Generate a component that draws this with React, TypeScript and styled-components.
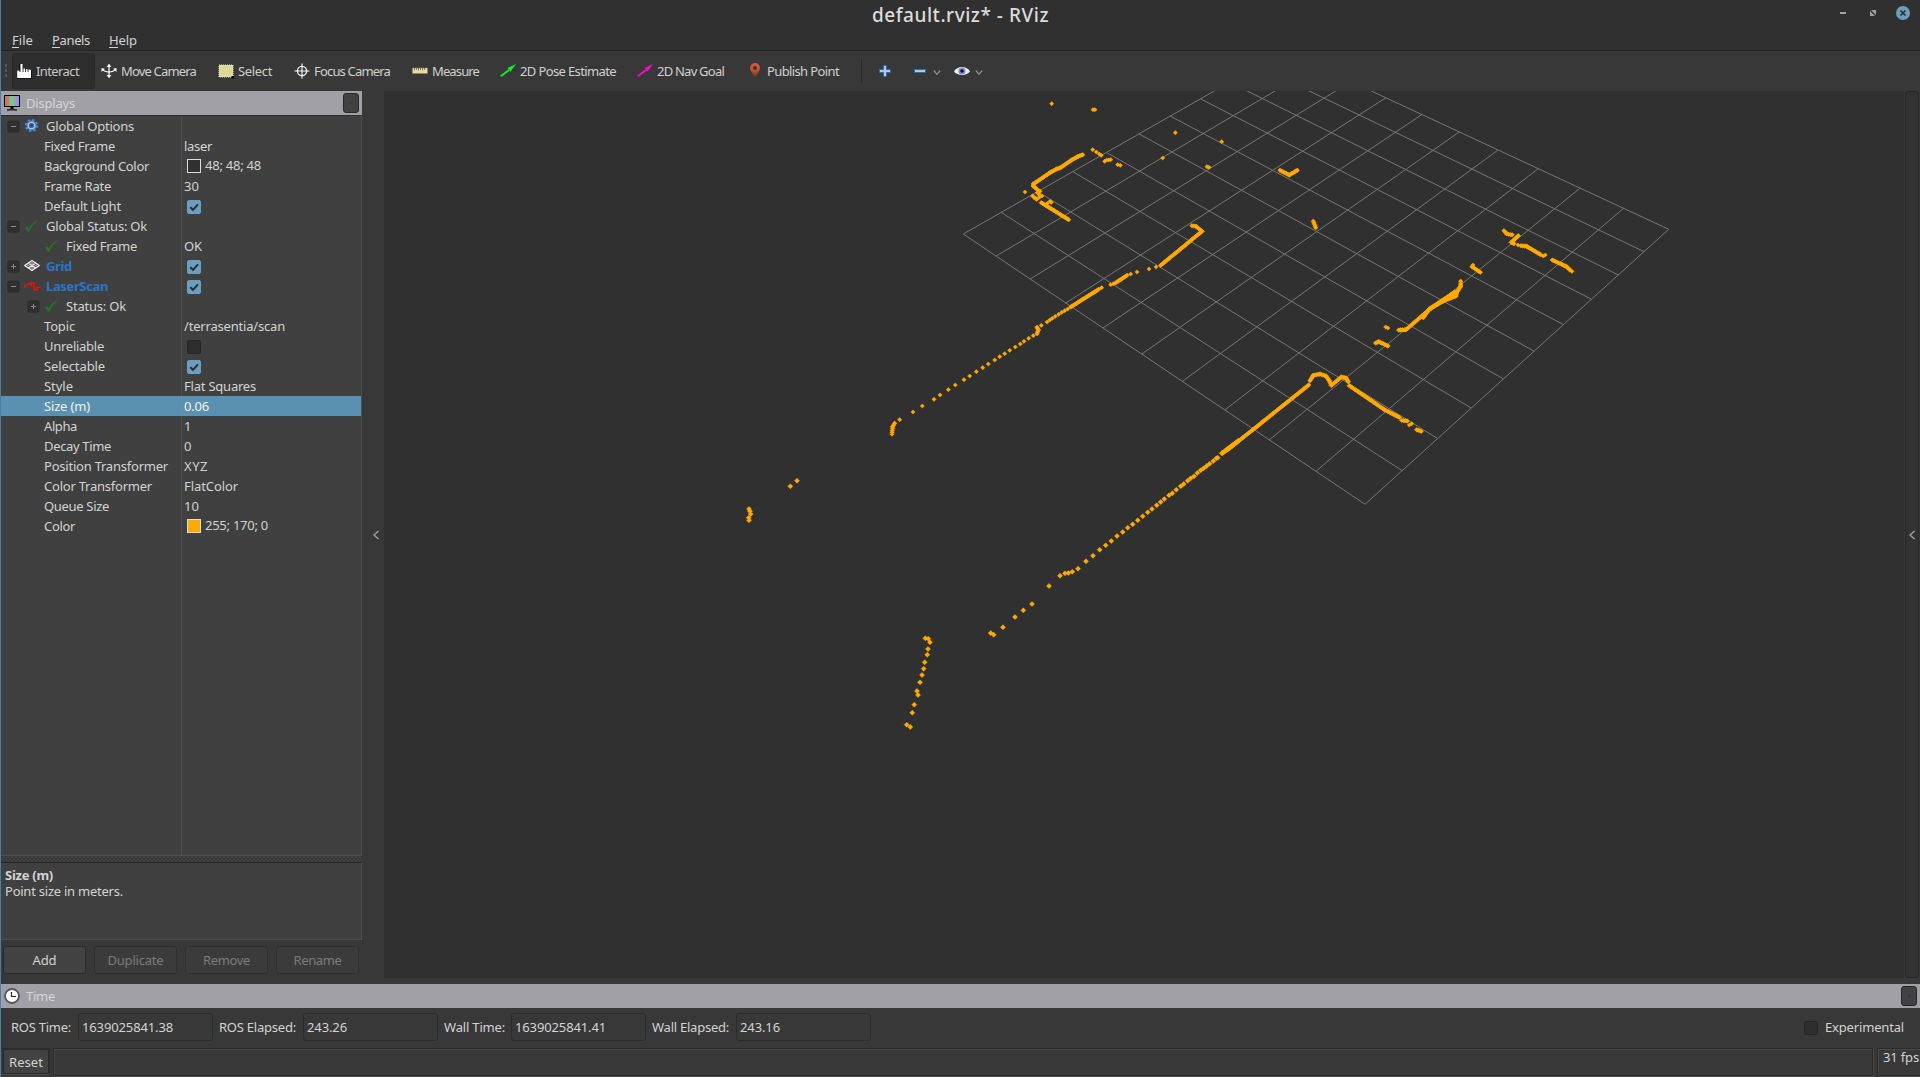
import React, { useLayoutEffect, useRef, useState } from "react";
import styled, { createGlobalStyle } from "styled-components";

const c = {
  window: "#303030",
  panel: "#383838",
  base: "#404040",
  line: "#4d4d4d",
  dark: "#2a2a2a",
  text: "#d3d3d3",
  muted: "#7b7b7b",
  dock: "#a1a0a6",
  accent: "#5b91b0",
  check: "#6a9fc0",
  link: "#2a76c6",
  laser: "#ffaa00",
};

const Global = createGlobalStyle`
  * { box-sizing: border-box; }
  body { margin: 0; background: ${c.window}; overflow: hidden; }
`;

const Window = styled.div`
  width: 1920px;
  height: 1077px;
  display: flex;
  flex-direction: column;
  overflow: hidden;
  background: ${c.panel};
  border-left: 1px solid #4682a8;
  color: ${c.text};
  font: 13px/20px "Noto Sans", "Open Sans", sans-serif;
`;

const Label = styled.span`
  display: inline-block;
  white-space: nowrap;
  flex: none;
`;

/* Text tracked so that it spans a given width. */
function Text({ w, children }: { w?: number; children: string }) {
  const ref = useRef<HTMLSpanElement>(null);
  const [gap, setGap] = useState(0);
  useLayoutEffect(() => {
    if (!w || !ref.current) return;
    setGap((w - ref.current.getBoundingClientRect().width) / children.length);
  }, [w, children]);
  return (
    <Label ref={ref} style={{ letterSpacing: gap }}>
      {children}
    </Label>
  );
}

/* ---------- title bar and menu ---------- */

const TitleBar = styled.header`
  height: 30px;
  flex: none;
  display: grid;
  grid-template-columns: 1fr auto 1fr;
  background: ${c.window};
`;
const Title = styled.div`
  grid-column: 2;
  font-size: 19px;
  line-height: 30px;
  font-weight: 500;
  color: #dcdcdc;
`;
const WindowButtons = styled.div`
  display: flex;
  justify-content: flex-end;
  padding: 6px 10px 0 0;
`;
const MenuBar = styled.nav`
  height: 21px;
  flex: none;
  display: flex;
  gap: 19px;
  padding-left: 11px;
  line-height: 20px;
  background: ${c.window};
  border-bottom: 1px solid #242424;
`;
const Menu = styled.div<{ $key: number }>`
  height: 18px;
  background: linear-gradient(${c.text}, ${c.text}) 0 100% / ${(p) => p.$key}px 1px no-repeat;
`;

/* ---------- toolbar ---------- */

const ToolBar = styled.div`
  height: 39px;
  flex: none;
  display: flex;
  align-items: center;
  padding-left: 4px;
`;
const Grip = styled.div`
  width: 2px;
  height: 13px;
  margin-right: 5px;
  background: repeating-linear-gradient(#565656 0 3px, transparent 3px 5px);
`;
const Tool = styled.div<{ $w: number; $on?: boolean }>`
  width: ${(p) => p.$w}px;
  height: 36px;
  flex: none;
  display: flex;
  align-items: center;
  gap: 4px;
  margin-right: ${(p) => (p.$on ? 2 : 0)}px;
  padding-left: 3px;
  border-radius: 3px;
  color: ${(p) => (p.$on ? "#c8c8c8" : "#d0d0d0")};
  border: 1px solid ${(p) => (p.$on ? "#292929" : "transparent")};
  background: ${(p) => (p.$on ? "#2d2d2d" : "none")};
`;
const ToolRule = styled.div`
  width: 1px;
  height: 24px;
  background: #272727;
`;
const ToolExtras = styled.div`
  display: flex;
  align-items: center;
  padding-left: 17px;
`;
const Gap = styled.div<{ $w: number }>`
  width: ${(p) => p.$w}px;
`;

/* ---------- centre ---------- */

const Body = styled.main`
  height: 894px;
  flex: none;
  display: flex;
`;
const Dock = styled.aside`
  width: 361px;
  flex: none;
  display: flex;
  flex-direction: column;
  padding-top: 1px;
`;
const DockTitle = styled.div<{ $r: number }>`
  height: 24px;
  flex: none;
  display: flex;
  align-items: center;
  gap: 6px;
  padding: 0 ${(p) => p.$r}px 0 3px;
  background: ${c.dock};
  color: #d6d6d8;
`;
const DockClose = styled.div`
  width: 16px;
  height: 20px;
  margin-left: auto;
  border: 1px solid #272727;
  border-radius: 3px;
  background: #424242;
  color: #383838;
  font-size: 9px;
  line-height: 18px;
  text-align: center;
`;
const Tree = styled.div`
  height: 741px;
  flex: none;
  border-top: 1px solid #2c2c2c;
  border-right: 1px solid ${c.line};
  border-bottom: 1px solid ${c.line};
  background: linear-gradient(90deg, transparent 180px, ${c.line} 180px 181px, transparent 181px) ${c.base};
`;
const Row = styled.div<{ $on?: boolean }>`
  height: 20px;
  display: grid;
  grid-template-columns: 183px 1fr;
  grid-template-rows: 20px;
  color: ${(p) => (p.$on ? "#f2f2f2" : c.text)};
  background: ${(p) =>
    p.$on ? `linear-gradient(90deg, transparent 180px, #6692ab 180px 181px, transparent 181px) ${c.accent}` : "none"};
`;
const Name = styled.div<{ $pad: number; $link?: boolean }>`
  display: flex;
  align-items: center;
  padding-left: ${(p) => p.$pad}px;
  font-weight: ${(p) => (p.$link ? 700 : 400)};
  color: ${(p) => (p.$link ? c.link : "inherit")};
`;
const Value = styled.div<{ $up?: boolean }>`
  height: 20px;
  display: flex;
  align-items: center;
  line-height: ${(p) => (p.$up ? 18 : 20)}px;
  padding-bottom: ${(p) => (p.$up ? 2 : 0)}px;
`;
const Expander = styled.div`
  width: 11px;
  height: 11px;
  flex: none;
  display: grid;
  place-items: center;
  margin-top: 1px;
  border-radius: 2px;
  background: #2f2f2f;
  box-shadow: 0 0 0 0.5px #272727;
`;
const IconSlot = styled.div<{ $pad: number }>`
  width: 16px;
  height: 16px;
  margin: 0 6px 1px ${(p) => p.$pad}px;
  flex: none;
`;
const Swatch = styled.div<{ $fill: string }>`
  width: 14px;
  height: 14px;
  margin: 1px 4px 0 3px;
  border: 1px solid #dddddd;
  background: ${(p) => p.$fill};
`;
const Box = styled.div<{ $on?: boolean; $m?: number }>`
  width: 14px;
  height: 14px;
  margin: 1px 0 0 ${(p) => p.$m ?? 3}px;
  border-radius: 2px;
  background: ${(p) => (p.$on ? c.check : "#2d2d2d")};
  border: 1px solid ${(p) => (p.$on ? c.check : "#272727")};
  svg { display: block; }
`;
const Splitter = styled.div`
  height: 6px;
  flex: none;
  background: repeating-conic-gradient(#474747 0 25%, #363636 0 50%) 0 0 / 4px 4px;
  opacity: 0.6;
`;
const Help = styled.div`
  height: 78px;
  flex: none;
  padding: 4px;
  line-height: 16px;
  background: ${c.base};
  border: solid ${c.line};
  border-width: 1px 1px 1px 0;
  border-top-color: #262626;
`;
const HelpTitle = styled.div`
  font-weight: 700;
`;
const Buttons = styled.div`
  display: flex;
  gap: 8px;
  padding: 6px 2px 0;
`;
const Button = styled.div<{ $off?: boolean }>`
  width: 83px;
  height: 28px;
  display: grid;
  place-items: center;
  border: 1px solid ${(p) => (p.$off ? "#303030" : "#2a2a2a")};
  border-radius: 3px;
  background: ${(p) => (p.$off ? "#3b3b3b" : "#424242")};
  color: ${(p) => (p.$off ? c.muted : c.text)};
`;
const Strip = styled.div<{ $w: number }>`
  width: ${(p) => p.$w}px;
  flex: none;
  display: flex;
  align-items: center;
  justify-content: center;
  padding: ${(p) => (p.$w > 20 ? "0 0 5px 6px" : "0")};
`;
const SideHandle = styled.div`
  width: 14px;
  height: 887px;
  margin: 1px 0 6px;
  display: grid;
  place-items: center;
  border: 1px solid #282828;
  border-radius: 3px;
  background: #323232;
`;
const View = styled.div`
  flex: 1;
  height: 888px;
  background: ${c.window};
  svg { display: block; }
`;

/* ---------- time panel and status ---------- */

const TimeRow = styled.div`
  height: 40px;
  flex: none;
  display: flex;
  align-items: center;
  padding: 0 16px 2px 10px;
`;
const Field = styled.div<{ $m: number }>`
  width: 135px;
  height: 28px;
  margin: 0 6px 0 ${(p) => p.$m}px;
  padding-left: 3px;
  line-height: 26px;
  border: 1px solid #2b2b2b;
  border-radius: 3px;
`;
const Experimental = styled.div`
  margin-left: auto;
  display: flex;
  align-items: center;
  gap: 7px;
`;
const Status = styled.footer`
  height: 29px;
  flex: none;
  display: flex;
`;
const ResetFrame = styled.div`
  width: 50px;
  height: 27px;
  border-right: 1px solid #2c2c2c;
  padding-left: 2px;
  border-top: 1px solid #2c2c2c;
  border-bottom: 1px solid #4a4a4a;
`;
const Reset = styled.div`
  width: 46px;
  height: 25px;
  display: grid;
  place-items: center;
  border: 1px solid #2a2a2a;
  border-radius: 2px;
  background: #424242;
`;
const Frame = styled.div<{ $w: number; $m: number }>`
  width: ${(p) => p.$w}px;
  height: 28px;
  flex: none;
  margin-left: ${(p) => p.$m}px;
  padding-left: 5px;
  line-height: 17px;
  border: 1px solid #2b2b2b;
  box-shadow: inset 1px 1px #484848, 1px 1px #484848;
`;

/* ---------- icons ---------- */

const Svg = ({ w = 16, h = 16, children }: { w?: number; h?: number; children: React.ReactNode }) => (
  <svg width={w} height={h} viewBox={`0 0 ${w} ${h}`} fill="none">
    {children}
  </svg>
);

const Hand = () => (
  <Svg>
    <path d="M1.200 15V7.500H3.500V9H4.500V1H6.500V5.500H9V6H11.500V6.500H14V7H15V15Z" fill="#fff" />
    <path d="M7 5V9M9.500 5.500V9M12 6V9M3.500 1V8M1 15.500H15.500V8" stroke="#111" strokeWidth=".8" />
  </Svg>
);
const Move = () => (
  <Svg>
    <path d="M8 1.500V14M1.500 6C4 10 12 10 14.500 6" stroke="#f4f4f4" strokeWidth="1.300" />
    <path d="M5.500 4L8 .8L10.500 4ZM5.500 12L8 15.200L10.500 12ZM.5 9V5L4 5.800ZM15.500 9V5L12 5.800Z" fill="#f4f4f4" />
  </Svg>
);
const SelectIcon = () => (
  <Svg>
    <rect x="1" y="2" width="14" height="12" fill="#dcd89a" stroke="#f3f0c8" strokeDasharray="1 1" />
    <path d="M13.500 13H16V15.500H13.500Z" fill="#000" />
  </Svg>
);
const Focus = () => (
  <Svg>
    <circle cx="8" cy="8" r="4.600" stroke="#f4f4f4" strokeWidth="1.400" />
    <path d="M8 .5V15.500M.5 8H15.500" stroke="#f4f4f4" strokeWidth="1.200" />
  </Svg>
);
const Ruler = () => (
  <Svg>
    <rect x=".5" y="5" width="15" height="5.500" fill="#eadca6" stroke="#8d8258" strokeWidth=".5" />
    <path d="M2.500 5V7.500M4.500 5V7M6.500 5V7.500M8.500 5V7M10.500 5V7.500M12.500 5V7" stroke="#6b6450" strokeWidth=".8" />
  </Svg>
);
const Arrow = ({ color }: { color: string }) => (
  <Svg>
    <path d="M.8 13.300L9 7" stroke={color} strokeWidth="2" />
    <path d="M16 1L7.600 5L10.400 8.800Z" fill={color} />
  </Svg>
);
const Pin = () => (
  <Svg>
    <defs>
      <linearGradient id="pin" x1="0" y1="0" x2="0" y2="1">
        <stop offset="0" stopColor="#e0523a" />
        <stop offset=".45" stopColor="#c8532f" />
        <stop offset="1" stopColor="#5c3814" />
      </linearGradient>
    </defs>
    <path fillRule="evenodd" fill="url(#pin)" d="M8 0A5 5 0 0 1 13 5C13 8.500 9.500 10.500 8 15C6.500 10.500 3 8.500 3 5A5 5 0 0 1 8 0ZM8 3A2 2 0 1 0 8 7A2 2 0 1 0 8 3Z" />
  </Svg>
);
const Plus = () => (
  <Svg w={12} h={12}>
    <path d="M4.500 .5H7.500V4.500H11.500V7.500H7.500V11.500H4.500V7.500H.5V4.500H4.500Z" fill="#a9c8ec" stroke="#2f68b0" />
  </Svg>
);
const Minus = () => (
  <Svg w={12} h={12}>
    <rect x=".5" y="4.500" width="11" height="3" fill="#a9c8ec" stroke="#2f68b0" />
  </Svg>
);
const Eye = () => (
  <Svg>
    <path d="M0 8.500C3 2.500 13 2.500 16 8.500C13 13 3 13 0 8.500Z" fill="#f0f0f0" />
    <circle cx="8" cy="8" r="3.600" fill="#7d8fd0" />
    <circle cx="8" cy="8" r="1.700" fill="#101018" />
  </Svg>
);
const Down = () => (
  <Svg w={8} h={8}>
    <path d="M.8 3.500L4 7.300L7.200 3.500" stroke="#909090" strokeWidth="1.300" />
  </Svg>
);
const Left = () => (
  <Svg w={8} h={10}>
    <path d="M6.500 1L2 5L6.500 9" stroke="#a0a0a0" strokeWidth="1.400" />
  </Svg>
);
const Monitor = () => (
  <Svg>
    <path d="M1 1H5.500V11H1Z" fill="#c97878" />
    <path d="M5.500 1H10.500V11H5.500Z" fill="#7cc87c" />
    <path d="M10.500 1H15V11H10.500Z" fill="#9a94e4" />
    <rect x=".5" y=".5" width="15" height="11" stroke="#000" />
    <path d="M6.500 12H9.500V14H6.500Z" fill="#000" />
    <path d="M3 15Q8 13 13 15Z" fill="#ddd" stroke="#000" strokeWidth=".8" />
  </Svg>
);
const Gear = () => (
  <Svg>
    <circle cx="7.500" cy="7.500" r="5.500" stroke="#4d8be0" strokeWidth="2.200" strokeDasharray="2.160 2.160" />
    <circle cx="7.500" cy="7.500" r="4.400" stroke="#4d8be0" strokeWidth="1.200" />
    <circle cx="7.500" cy="7.500" r="3.200" stroke="#a4c6f2" strokeWidth="1.300" />
    <circle cx="7.500" cy="7.500" r="2" fill="#404040" stroke="#4379c0" strokeWidth="1" />
  </Svg>
);
const Tick = () => (
  <Svg>
    <path d="M1 9.500L3 8L4.800 10.500C7 6.500 9.500 4 14.300 1.500C10 5.500 7.500 9 5.300 13.500H4Z" fill="#1e7a1e" />
  </Svg>
);
const GridIcon = () => (
  <Svg>
    <path d="M.7 7.500L8 2.500L15.300 7.500L8 12.500ZM4.300 5L11.700 10M11.700 5L4.300 10" stroke="#f2f2f2" strokeWidth="1.200" />
    <path d="M2.500 6.200L9.800 11.200M6.200 3.700L13.500 8.700M13.500 6.200L6.200 11.200M9.800 3.700L2.500 8.700" stroke="#f2f2f2" strokeWidth=".5" />
  </Svg>
);
const Scan = () => (
  <Svg>
    <path d="M.5 9.800V7.500H3.500M4.500 7V5.700H7.500V8M7 4.700H10V11.700H13V9.500H15.800" stroke="#fb0808" strokeWidth="1.600" />
  </Svg>
);
const Clock = () => (
  <Svg>
    <circle cx="8" cy="8" r="7" fill="#fff" stroke="#555" strokeWidth="1.800" />
    <path d="M7.500 4V8.500H12" stroke="#222" strokeWidth="1.200" />
  </Svg>
);
const CheckMark = () => (
  <Svg w={12} h={12}>
    <path d="M2.300 6.200L5 8.800L10 3.300" stroke="#2b2b2b" strokeWidth="2" />
  </Svg>
);
const WindowIcons = () => (
  <Svg w={70} h={14}>
    <path d="M0 6H6V8H0Z" fill="#a0a0a0" />
    <path d="M31 4H36V9ZM30 5V10H35Z" fill="#a0a0a0" />
    <circle cx="63" cy="7" r="7" fill="#6a9fc0" />
    <path d="M60.500 4.500L65.500 9.500M65.500 4.500L60.500 9.500" stroke="#2d2d2d" strokeWidth="1.700" />
  </Svg>
);

/* ---------- 3D view ---------- */

type P = [number, number];

/* Perspective of the ten by ten ground grid, from its four corners. */
const corners: P[] = [[963.3, 234], [1365, 504.3], [1668.7, 229.3], [1284.8, 50.8]];
function project(u: number, v: number): P {
  const [[x0, y0], [x1, y1], [x2, y2], [x3, y3]] = corners;
  const sx = x0 - x1 + x2 - x3;
  const sy = y0 - y1 + y2 - y3;
  const den = (x1 - x2) * (y3 - y2) - (x3 - x2) * (y1 - y2);
  const g = (sx * (y3 - y2) - (x3 - x2) * sy) / den;
  const h = ((x1 - x2) * sy - sx * (y1 - y2)) / den;
  const k = g * u + h * v + 1;
  return [
    ((x1 - x0 + g * x1) * u + (x3 - x0 + h * x3) * v + x0) / k,
    ((y1 - y0 + g * y1) * u + (y3 - y0 + h * y3) * v + y0) / k,
  ];
}
const gridPath = Array.from({ length: 11 }, (_, i) => i / 10)
  .flatMap((t) => [[project(t, 0), project(t, 1)], [project(0, t), project(1, t)]])
  .map(([a, b]) => `M${a[0]} ${a[1]}L${b[0]} ${b[1]}`)
  .join("");

/* Laser returns. Each sector has an origin, and coordinates in thirds of a pixel. */
interface Sector { x: number; y: number; r: number; dots: number[]; walls: number[][] }
const sectors: Sector[] = [
  {
    x: 880, y: 90, r: 2.1,
    dots: [
      515,41, 639,59, 645,59, 886,128, 1025,155, 848,204, 981,230, 987,232, 638,179, 649,186, 658,192, 664,196,
      674,214, 680,210, 686,210, 692,209, 713,224, 721,226, 435,306, 472,308, 480,304, 477,313, 486,318, 478,322,
      502,340, 510,334, 514,337, 828,531, 807,537, 771,546, 752,552, 700,581, 692,584, 665,593, 484,706,
      460,737, 446,745, 432,754, 421,762, 406,771, 389,781, 374,791, 359,800, 344,810, 325,822, 308,833,
      289,845, 269,858, 252,869, 226,885, 205,899, 180,915, 162,928, 127,948, 99,966, 59,989,
      563,657, 554,662, 545,667, 536,673, 526,679, 517,685, 509,690, 501,696,
    ],
    walls: [
      [608,194, 595,199, 575,210, 540,234, 530,237, 510,248, 460,282, 460,288, 476,302],
      [458,318, 470,328], [484,338, 566,389], [936,407, 948,409, 966,424, 842,526],
      [741,556, 706,579], [656,598, 572,651], [471,712, 475,720, 471,731],
      [44,1000, 38,1010, 36,1032], [1200,241, 1228,255, 1252,241], [1300,394, 1307,413],
      [1286,885, 1120,1018, 1042,1080],
      [1290,872, 1300,856, 1320,852, 1338,858, 1348,872, 1354,886, 1384,861, 1398,864, 1405,875],
    ],
  },
  {
    x: 1300, y: 90, r: 2.1,
    dots: [328,1005, 335,1001, 257,711, 264,714, 519,525, 637,434, 730,498, 736,495, 810,540, 816,544, 654,465],
    walls: [
      [148,887, 255,960, 298,982], [305,991, 322,993], [350,1019, 364,1024], [227,759, 236,755, 264,768],
      [296,720, 318,719, 390,657, 430,633, 468,618, 470,608, 482,588, 482,574], [370,683, 388,657, 430,629, 465,605],
      [516,530, 541,547], [612,422, 620,431, 632,434], [655,437, 634,457, 642,461], [663,467, 680,469, 722,494],
      [757,510, 800,530, 810,540],
    ],
  },
  {
    x: 720, y: 400, r: 2.5,
    dots: [
      1493,173, 1489,175, 1480,183, 1469,191, 1460,198, 1451,205, 1442,211, 1432,219, 1422,229, 1412,235, 1403,242,
      1391,252, 1382,259, 1369,269, 1357,280, 1347,286, 1333,297, 1322,306, 1310,316, 1296,327, 1283,337,
      1268,349, 1253,361, 1238,373, 1223,383, 1208,396, 1191,408, 1174,423, 1157,436, 1139,449, 1119,467,
      1098,484, 1074,506, 1057,515, 1045,519, 1035,520, 1020,527, 987,558, 936,612, 910,631, 885,651,
      849,682, 812,699, 821,704, 231,242, 211,259, 87,327, 90,334, 92,342, 86,353, 87,361,
      616,715, 625,716, 630,727, 624,747, 622,764, 614,787, 611,806, 606,825, 600,847, 591,873, 594,885,
      583,914, 577,938, 560,974, 571,981,
    ],
    walls: [[1556,122, 1506,160]],
  },
];

function wallPoints(w: number[]): P[] {
  const out: P[] = [];
  for (let i = 0; i + 3 < w.length; i += 2) {
    const dx = w[i + 2] - w[i];
    const dy = w[i + 3] - w[i + 1];
    const n = Math.max(1, Math.round(Math.hypot(dx, dy) / 5));
    for (let k = 0; k <= n; k++) out.push([w[i] + (dx * k) / n, w[i + 1] + (dy * k) / n]);
  }
  return out;
}
const diamond = (s: Sector, r: number) => ([px, py]: P) => {
  const x = (s.x + px / 3).toFixed(1);
  const y = (s.y + py / 3 - r).toFixed(1);
  return `M${x} ${y}l${r} ${r}l${-r} ${r}l${-r} ${-r}z`;
};
const laserPath = sectors
  .flatMap((s) => {
    const dots: P[] = [];
    for (let i = 0; i < s.dots.length; i += 2) dots.push([s.dots[i], s.dots[i + 1]]);
    return [...dots.map(diamond(s, s.r)), ...s.walls.flatMap(wallPoints).map(diamond(s, s.r + 0.2))];
  })
  .join("");

const Scene = () => (
  <svg width="1520" height="888" viewBox="384 90 1520 888">
    <path d={gridPath} stroke="#767676" strokeWidth="1" fill="none" />
    <path d={laserPath} fill={c.laser} stroke={c.laser} strokeWidth=".5" />
    <path d="M384 90.500H1904" stroke="#353535" />
  </svg>
);

/* ---------- data ---------- */

interface Item {
  name: string;
  w: number;
  kind?: "root" | "link" | "leaf" | "sub";
  open?: boolean;
  icon?: React.ReactNode;
  value?: string;
  vw?: number;
  check?: boolean;
  swatch?: string;
  selected?: boolean;
}
const items: Item[] = [
  { name: "Global Options", w: 88, kind: "root", open: true, icon: <Gear /> },
  { name: "Fixed Frame", w: 71, value: "laser", vw: 28 },
  { name: "Background Color", w: 105, value: "48; 48; 48", vw: 56, swatch: "#303030" },
  { name: "Frame Rate", w: 67, value: "30", vw: 15 },
  { name: "Default Light", w: 77, check: true },
  { name: "Global Status: Ok", w: 101, kind: "root", open: true, icon: <Tick /> },
  { name: "Fixed Frame", w: 71, kind: "leaf", icon: <Tick />, value: "OK", vw: 18 },
  { name: "Grid", w: 26, kind: "link", open: false, icon: <GridIcon />, check: true },
  { name: "LaserScan", w: 62, kind: "link", open: true, icon: <Scan />, check: true },
  { name: "Status: Ok", w: 60, kind: "sub", open: false, icon: <Tick /> },
  { name: "Topic", w: 31, value: "/terrasentia/scan", vw: 101 },
  { name: "Unreliable", w: 60, check: false },
  { name: "Selectable", w: 61, check: true },
  { name: "Style", w: 29, value: "Flat Squares", vw: 72 },
  { name: "Size (m)", w: 46, value: "0.06", vw: 25, selected: true },
  { name: "Alpha", w: 33, value: "1", vw: 7 },
  { name: "Decay Time", w: 67, value: "0", vw: 8 },
  { name: "Position Transformer", w: 124, value: "XYZ", vw: 24 },
  { name: "Color Transformer", w: 108, value: "FlatColor", vw: 54 },
  { name: "Queue Size", w: 65, value: "10", vw: 15 },
  { name: "Color", w: 31, value: "255; 170; 0", vw: 63, swatch: c.laser },
];

const tools = [
  { name: "Interact", w: 43, box: 83, icon: <Hand />, on: true },
  { name: "Move Camera", w: 75, box: 117, icon: <Move /> },
  { name: "Select", w: 34, box: 76, icon: <SelectIcon /> },
  { name: "Focus Camera", w: 76, box: 118, icon: <Focus /> },
  { name: "Measure", w: 47, box: 88, icon: <Ruler /> },
  { name: "2D Pose Estimate", w: 96, box: 137, icon: <Arrow color="#0df02c" /> },
  { name: "2D Nav Goal", w: 67, box: 110, icon: <Arrow color="#f40cc8" /> },
  { name: "Publish Point", w: 72, box: 118, icon: <Pin /> },
];

const indent = { root: 7, link: 7, sub: 27, leaf: 43 };

function TreeRow({ item }: { item: Item }) {
  const pad = item.kind ? indent[item.kind] : 43;
  return (
    <Row $on={item.selected}>
      <Name $pad={pad} $link={item.kind === "link"}>
        {item.open !== undefined && (
          <Expander>
            <Svg w={7} h={7}>
              <path d={item.open ? "M1 3.500H6" : "M1 3.500H6M3.500 1V6"} stroke="#8c8c8c" />
            </Svg>
          </Expander>
        )}
        {item.icon && <IconSlot $pad={item.kind === "leaf" ? 0 : 5}>{item.icon}</IconSlot>}
        <Text w={item.w}>{item.name}</Text>
      </Name>
      <Value $up={item.swatch !== undefined}>
        {item.swatch && <Swatch $fill={item.swatch} />}
        {item.check !== undefined && <Box $on={item.check}>{item.check && <CheckMark />}</Box>}
        {item.value && <Text w={item.vw}>{item.value}</Text>}
      </Value>
    </Row>
  );
}

export default function App() {
  return (
    <Window>
      <Global />
      <TitleBar>
        <Title><Text w={177}>default.rviz* - RViz</Text></Title>
        <WindowButtons><WindowIcons /></WindowButtons>
      </TitleBar>
      <MenuBar>
        <Menu $key={7}><Text w={21}>File</Text></Menu>
        <Menu $key={8}><Text w={38}>Panels</Text></Menu>
        <Menu $key={9}><Text w={28}>Help</Text></Menu>
      </MenuBar>
      <ToolBar>
        <Grip />
        {tools.map((t) => (
          <Tool key={t.name} $w={t.box} $on={t.on}>
            {t.icon}
            <Text w={t.w}>{t.name}</Text>
          </Tool>
        ))}
        <ToolRule />
        <ToolExtras>
          <Plus /><Gap $w={23} /><Minus /><Gap $w={7} /><Down /><Gap $w={13} /><Eye /><Gap $w={5} /><Down />
        </ToolExtras>
      </ToolBar>
      <Body>
        <Dock>
          <DockTitle $r={3}>
            <Monitor />
            <Text w={49}>Displays</Text>
            <DockClose>×</DockClose>
          </DockTitle>
          <Tree>
            {items.map((item, i) => <TreeRow key={i} item={item} />)}
          </Tree>
          <Splitter />
          <Help>
            <HelpTitle><Text w={48}>Size (m)</Text></HelpTitle>
            <Text w={118}>Point size in meters.</Text>
          </Help>
          <Buttons>
            <Button><Text w={24}>Add</Text></Button>
            <Button $off><Text w={56}>Duplicate</Text></Button>
            <Button $off><Text w={47}>Remove</Text></Button>
            <Button $off><Text w={48}>Rename</Text></Button>
          </Buttons>
        </Dock>
        <Strip $w={22}><Left /></Strip>
        <View><Scene /></View>
        <Strip $w={16}><SideHandle><Left /></SideHandle></Strip>
      </Body>
      <DockTitle $r={3}>
        <Clock />
        <Text w={29}>Time</Text>
        <DockClose>×</DockClose>
      </DockTitle>
      <TimeRow>
        <Text w={60}>ROS Time:</Text>
        <Field $m={7}><Text w={91}>1639025841.38</Text></Field>
        <Text w={77}>ROS Elapsed:</Text>
        <Field $m={7}><Text w={40}>243.26</Text></Field>
        <Text w={61}>Wall Time:</Text>
        <Field $m={6}><Text w={91}>1639025841.41</Text></Field>
        <Text w={77}>Wall Elapsed:</Text>
        <Field $m={7}><Text w={40}>243.16</Text></Field>
        <Experimental>
          <Box $m={0} />
          <Text w={79}>Experimental</Text>
        </Experimental>
      </TimeRow>
      <Status>
        <ResetFrame><Reset><Text w={34}>Reset</Text></Reset></ResetFrame>
        <Frame $w={1820} $m={3} />
        <Frame $w={45} $m={4}><Text w={36}>31 fps</Text></Frame>
      </Status>
    </Window>
  );
}
